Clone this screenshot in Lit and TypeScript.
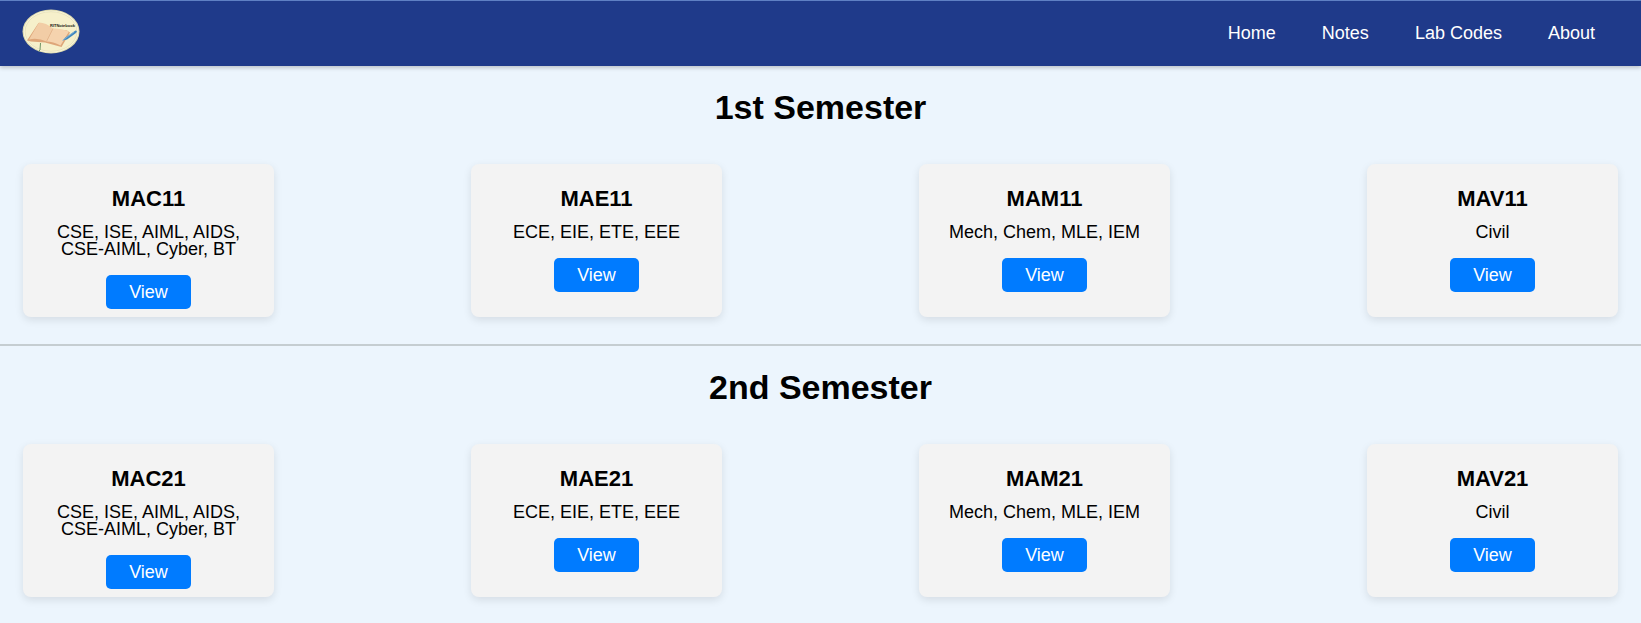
import { LitElement, html, css } from "lit";
import { customElement } from "lit/decorators.js";

interface Course {
  code: string;
  branches: string;
}

interface Semester {
  name: string;
  courses: Course[];
}

const branchGroups: [string, string][] = [
  ["MAC", "CSE, ISE, AIML, AIDS, CSE-AIML, Cyber, BT"],
  ["MAE", "ECE, EIE, ETE, EEE"],
  ["MAM", "Mech, Chem, MLE, IEM"],
  ["MAV", "Civil"],
];

const buildSemester = (name: string, suffix: string): Semester => ({
  name,
  courses: branchGroups.map(([prefix, branches]) => ({ code: prefix + suffix, branches })),
});

const semesters = [buildSemester("1st Semester", "11"), buildSemester("2nd Semester", "21")];

@customElement("site-logo")
class SiteLogo extends LitElement {
  static styles = css`
    :host { display: block; }
    .logo { display: block; width: 58px; height: 45px; }
    .wordmark { font: bold 4px "Liberation Sans", Arial, sans-serif; fill: #1d1c12; }
  `;

  render() {
    return html`
      <svg class="logo" viewBox="0 0 58 45" role="img" aria-label="RITNotebook">
        <ellipse cx="29" cy="22.5" rx="28.5" ry="22" fill="#ddd9ae" />
        <ellipse cx="29" cy="22.5" rx="27.4" ry="21" fill="#faf6dc" />
        <ellipse cx="29" cy="22.5" rx="26" ry="19.8" fill="#f6f0cb" stroke="#d8d2a4" stroke-width=".5" />
        <path d="M18.5 34 18 41 16.5 42.5" fill="none" stroke="#6f9465" stroke-width="1" />
        <path d="M5 31.5 16.5 14 31 20.5 45 21.5 48 23.5 39.5 38 23 33.5 9 32.5Z" fill="#dea679" />
        <path d="M7 30.5 17 13.5Q24 13.5 31 19.5L24.5 32.5Q16 28.5 7 30.5Z" fill="#f2cda6" />
        <path d="M31 19.5Q39 19 47 22.5L38.5 36.5Q31 32.5 24.5 32.5Z" fill="#f5d3ae" />
        <path d="M31 19.5 24.5 32.5" stroke="#e0b086" stroke-width=".7" />
        <path d="M53.5 21.5Q56 22 54 24L45 30.5 40.5 31.5 43.5 28.5Z" fill="#3f86bd" />
        <path d="M40.5 31.5 52 23" stroke="#8fbedb" stroke-width=".7" />
        <text class="wordmark" x="28" y="18">RITNotebook</text>
      </svg>
    `;
  }
}

@customElement("site-nav")
class SiteNav extends LitElement {
  static styles = css`
    :host { display: block; }
    .bar {
      display: flex;
      align-items: center;
      justify-content: space-between;
      box-sizing: border-box;
      min-height: 66px;
      padding: 0 46px 2px 22px;
      border-top: 1px solid #5f80c4;
      background: #1f3a8a;
      box-shadow: 0 2px 4px rgba(0, 0, 0, 0.2);
    }
    .brand { margin-bottom: 2px; }
    .links { display: flex; gap: 46px; margin: 0; padding: 0; list-style: none; }
    .link { color: #fff; font-size: 18px; line-height: 24px; text-decoration: none; }
  `;

  render() {
    return html`
      <nav class="bar">
        <a class="brand" href="#home" aria-label="Home page"><site-logo></site-logo></a>
        <ul class="links">
          ${["Home", "Notes", "Lab Codes", "About"].map(
            (label) => html`<li>
              <a class="link" href="#${label.toLowerCase().replace(" ", "-")}">${label}</a>
            </li>`
          )}
        </ul>
      </nav>
    `;
  }
}

@customElement("course-card")
class CourseCard extends LitElement {
  static properties = { course: { attribute: false } };
  declare course: Course;

  static styles = css`
    :host { display: block; width: 251px; }
    .card {
      display: flex;
      flex-direction: column;
      align-items: center;
      box-sizing: border-box;
      height: 100%;
      padding: 23px 16px 8px;
      border-radius: 8px;
      background: #f3f3f3;
      box-shadow: 0 3px 8px rgba(0, 0, 0, 0.1);
      text-align: center;
    }
    .code { margin: 0 0 13px; font-size: 22px; line-height: 24px; }
    .branches { margin: 0 0 17px; font-size: 18px; line-height: 17px; }
    .view {
      padding: 0 23px;
      border: 0;
      border-radius: 5px;
      background: #007bff;
      color: #fff;
      font: inherit;
      font-size: 18px;
      line-height: 34px;
      cursor: pointer;
    }
  `;

  render() {
    return html`
      <article class="card">
        <h3 class="code">${this.course.code}</h3>
        <p class="branches">${this.course.branches}</p>
        <button class="view" type="button" aria-label="View ${this.course.code}">View</button>
      </article>
    `;
  }
}

@customElement("app-root")
class AppRoot extends LitElement {
  static styles = css`
    :host {
      display: block;
      box-sizing: border-box;
      min-height: 100vh;
      background: #ecf5fd;
      color: #000;
      font-family: "Liberation Sans", Arial, sans-serif;
    }
    .semester { padding: 21px 23px 27px; border-bottom: 2px solid #c5cdd1; }
    .semester:last-child { padding-bottom: 24px; border-bottom: 0; }
    .title { margin: 0 0 37px; font-size: 34px; line-height: 40px; text-align: center; }
    .courses { display: flex; flex-wrap: wrap; justify-content: space-between; gap: 24px; }
  `;

  render() {
    return html`
      <site-nav></site-nav>
      <main>
        ${semesters.map(
          (semester) => html`
            <section class="semester">
              <h2 class="title">${semester.name}</h2>
              <div class="courses">
                ${semester.courses.map((course) => html`<course-card .course=${course}></course-card>`)}
              </div>
            </section>
          `
        )}
      </main>
    `;
  }
}
